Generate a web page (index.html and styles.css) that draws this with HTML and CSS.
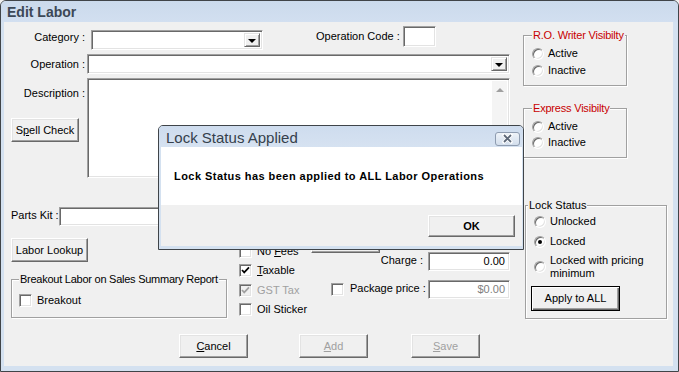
FILE: index.html
```html
<!DOCTYPE html>
<html>
  <head>
    <link rel="stylesheet" href="styles.css">
  </head>
  <body>
    <div class="window">
      <div class="titlebar">Edit Labor</div>
      <div class="client">
        <div class="main">
          <div class="form">
            <div class="row row-top">
              <span class="lbl lbl-col lbl-category">Category :</span>
              <div class="sunken combo combo-category"><div class="field"></div><div class="drop"><i></i></div></div>
              <span class="lbl lbl-opcode">Operation Code :</span>
              <div class="sunken opcode"></div>
            </div>
            <div class="row row-operation">
              <span class="lbl lbl-col">Operation :</span>
              <div class="sunken combo combo-operation"><div class="field"></div><div class="drop"><i></i></div></div>
            </div>
            <div class="row row-description">
              <div class="desc-left">
                <span class="lbl lbl-col">Description :</span>
                <div class="btn spell">S<u>p</u>ell Check</div>
              </div>
              <div class="sunken memo">
                <div class="memo-text"></div>
                <div class="scroll"><i></i></div>
              </div>
            </div>
            <div class="lower">
              <div class="lower-left">
                <div class="parts-row">
                  <span class="lbl lbl-parts">Parts Kit :</span>
                  <div class="sunken parts"></div>
                </div>
                <div class="btn lookup">Labor Lookup</div>
                <div class="group breakout">
                  <span class="legend">Breakout Labor on Sales Summary Report</span>
                  <div class="check check-breakout"><span class="box"></span><span>Breakout</span></div>
                </div>
              </div>
              <div class="lower-mid">
                <div class="check check-nofees"><span class="box"></span><span>No <u>F</u>ees</span></div>
                <div class="check check-taxable"><span class="box on"><svg width="9" height="9" viewBox="0 0 9 9"><path d="M1 4 L3.2 6.4 L8 1.4" fill="none" stroke="#000" stroke-width="1.7"/></svg></span><span><u>T</u>axable</span></div>
                <div class="check check-gst off"><span class="box on dis"><svg width="9" height="9" viewBox="0 0 9 9"><path d="M1 4 L3.2 6.4 L8 1.4" fill="none" stroke="#a0a0a0" stroke-width="1.7"/></svg></span><span>GST Tax</span></div>
                <div class="check check-oil"><span class="box"></span><span>Oil Sticker</span></div>
              </div>
              <div class="lower-right">
                <div class="btn fee"></div>
                <div class="charge-row">
                  <span class="lbl lbl-charge">Charge :</span>
                  <div class="sunken money">0.00</div>
                </div>
                <div class="package-row">
                  <span class="box"></span>
                  <span class="lbl lbl-package">Package price :</span>
                  <div class="sunken money dim">$0.00</div>
                </div>
              </div>
            </div>
          </div>
          <div class="side">
            <div class="group ro">
              <span class="legend red">R.O. Writer Visibilty</span>
              <div class="radio r1"><span class="dot"></span><span>Active</span></div>
              <div class="radio r2"><span class="dot"></span><span>Inactive</span></div>
            </div>
            <div class="group express">
              <span class="legend red">Express Visibilty</span>
              <div class="radio e1"><span class="dot"></span><span>Active</span></div>
              <div class="radio e2"><span class="dot"></span><span>Inactive</span></div>
            </div>
            <div class="group lock">
              <span class="legend">Lock Status</span>
              <div class="radio l1"><span class="dot"></span><span>Unlocked</span></div>
              <div class="radio l2"><span class="dot on"></span><span>Locked</span></div>
              <div class="radio l3"><span class="dot"></span><span>Locked with pricing<br>minimum</span></div>
              <div class="btn default apply">Apply to ALL</div>
            </div>
          </div>
        </div>
        <div class="actions">
          <div class="btn act cancel"><span><u>C</u>ancel</span></div>
          <div class="btn act add off"><span><u>A</u>dd</span></div>
          <div class="btn act save off"><span><u>S</u>ave</span></div>
        </div>
      </div>
    </div>

    <div class="dialog">
      <div class="dlg-title">
        <span>Lock Status Applied</span>
        <div class="close"><svg width="23" height="12" viewBox="0 0 23 12"><path d="M8 2 L15 9 M15 2 L8 9" stroke="#fff" stroke-width="3.4" stroke-linecap="round"/><path d="M8 2 L15 9 M15 2 L8 9" stroke="#5d6878" stroke-width="1.8"/></svg></div>
      </div>
      <div class="dlg-body">Lock Status has been applied to ALL Labor Operations</div>
      <div class="dlg-foot">
        <div class="btn ok">OK</div>
      </div>
    </div>
  </body>
</html>
```

FILE: styles.css
```css
body {
  margin: 0;
  font-family: "Liberation Sans", Arial, sans-serif;
  font-size: 11px;
  color: #000;
  background: #f0f0f0;
}
u { text-decoration: underline; text-underline-offset: 1px; }

/* window frame */
.window {
  width: 679px;
  height: 372px;
  box-sizing: border-box;
  border: 1px solid #404448;
  border-radius: 6px 6px 0 0;
  background: #d4e1f0;
  padding: 0 5px 5px 3px;
  display: flex;
  flex-direction: column;
}
.titlebar {
  height: 19px;
  margin: 0 -5px 0 -3px;
  padding: 2px 0 0 6px;
  border-radius: 5px 5px 0 0;
  background: linear-gradient(#cbdaec, #d2dff0);
  font-size: 14px;
  font-weight: bold;
  line-height: 19px;
  color: #3c4856;
}
.client {
  flex: 1;
  background: #f0f0f0;
}
.main { display: flex; height: 296px; }

/* 3d borders */
.sunken {
  box-sizing: border-box;
  background: #fff;
  border: 1px solid;
  border-color: #a0a0a0 #fff #fff #a0a0a0;
  box-shadow: inset 1px 1px 0 #696969, inset -1px -1px 0 #e3e3e3;
}
.btn {
  box-sizing: border-box;
  background: #f0f0f0;
  border: 1px solid;
  border-color: #fff #696969 #696969 #fff;
  box-shadow: inset -1px -1px 0 #a0a0a0, inset 1px 1px 0 #e3e3e3;
  display: flex;
  align-items: center;
  justify-content: center;
  line-height: 13px;
}
.btn.default {
  border: 1px solid #000;
  box-shadow: inset 1px 1px 0 #fff, inset -1px -1px 0 #696969, inset -2px -2px 0 #a0a0a0;
}
.off { color: #a0a0a0; }
.lbl { line-height: 13px; white-space: nowrap; }

/* top form */
.form { width: 511px; padding-top: 4px; }
.row { display: flex; align-items: flex-start; }
.lbl-col { width: 81px; text-align: right; }
.lbl-category { margin-top: 5px; }
.combo {
  display: flex;
  height: 20px;
  padding: 2px;
}
.combo .field { flex: 1; }
.combo .drop {
  width: 16px;
  box-sizing: border-box;
  background: #f0f0f0;
  border: 1px solid;
  border-color: #e3e3e3 #696969 #696969 #e3e3e3;
  box-shadow: inset 1px 1px 0 #fff, inset -1px -1px 0 #a0a0a0;
  display: flex;
  align-items: center;
  justify-content: center;
}
.combo .drop i {
  width: 0;
  height: 0;
  border-left: 4px solid transparent;
  border-right: 4px solid transparent;
  border-top: 4px solid #000;
  margin-top: 1px;
}
.combo-category { margin: 4px 0 0 6px; width: 172px; }
.lbl-opcode { margin: 4px 0 0 53px; width: 83px; text-align: right; }
.opcode { width: 33px; height: 21px; margin-left: 4px; }
.row-operation { margin-top: 4px; }
.row-operation .lbl-col { margin-top: 4px; }
.combo-operation { margin-left: 2px; width: 423px; }
.row-description { margin-top: 4px; }
.desc-left { display: flex; flex-direction: column; width: 81px; }
.desc-left .lbl-col { margin-top: 9px; }
.spell { margin: 18px 0 0 7px; width: 68px; height: 24px; }
.memo {
  margin-left: 2px;
  width: 423px;
  height: 100px;
  padding: 2px;
  display: flex;
}
.memo-text { flex: 1; }
.scroll {
  width: 15px;
  background: #f4f4f4;
  display: flex;
  justify-content: center;
}
.scroll i {
  margin-top: 7px;
  width: 0;
  height: 0;
  border-left: 4px solid transparent;
  border-right: 4px solid transparent;
  border-bottom: 4px solid #a0a0a0;
}

/* lower part */
.lower { display: flex; height: 140px; }
.lower-left { width: 225px; padding-left: 7px; }
.parts-row { display: flex; margin-top: 29px; }
.lbl-parts { width: 48px; margin-top: 2px; }
.parts { width: 172px; height: 19px; }
.lookup { margin-top: 12px; width: 77px; height: 24px; }

.group {
  box-sizing: border-box;
  border: 1px solid #a0a0a0;
  box-shadow: inset 1px 1px 0 #fff, 1px 1px 0 #fff;
}
.legend {
  display: table;
  white-space: nowrap;
  line-height: 13px;
  margin: -7px 0 0 7px;
  padding: 0 1px;
  background: #f0f0f0;
}
.legend.red { color: #c80000; letter-spacing: -0.2px; }
.breakout .legend { letter-spacing: -0.25px; }
.breakout { margin-top: 17px; width: 216px; height: 39px; }

.check { display: flex; align-items: center; height: 13px; line-height: 13px; white-space: nowrap; }
.check > span + span { margin-left: 5px; }
.box {
  box-sizing: border-box;
  width: 13px;
  height: 13px;
  flex: none;
  background: #fff;
  border: 1px solid;
  border-color: #a0a0a0 #fff #fff #a0a0a0;
  box-shadow: inset 1px 1px 0 #696969, inset -1px -1px 0 #e3e3e3;
  display: flex;
  align-items: center;
  justify-content: center;
}
.box.dis { background: #f0f0f0; }
.check-breakout { margin: 8px 0 0 7px; }

.lower-mid { width: 88px; padding-left: 3px; }
.check-nofees { margin-top: 67px; }
.check-taxable { margin-top: 6px; }
.check-gst { margin-top: 7px; }
.check-oil { margin-top: 6px; }

.lower-right { width: 183px; }
.fee { margin: 53px 0 0 -16px; width: 69px; height: 22px; }
.charge-row { display: flex; margin-top: -1px; }
.lbl-charge { width: 96px; text-align: right; margin-top: 2px; }
.money {
  width: 82px;
  height: 19px;
  margin-left: 5px;
  padding: 2px 4px 0 0;
  text-align: right;
  line-height: 13px;
}
.money.dim { color: #808080; }
.package-row { display: flex; margin-top: 9px; }
.package-row .box { margin: 3px 0 0 4px; }
.lbl-package { flex: 1; margin: 2px 0 0 6px; }
.package-row .money { margin-left: 0; }

/* right column */
.side { margin-left: 8px; width: 144px; }
.ro { margin-top: 13px; width: 104px; height: 51px; }
.express { margin-top: 22px; width: 104px; height: 50px; }
.lock { margin: 47px 0 0 2px; width: 142px; height: 114px; }
.ro .legend, .express .legend { margin-left: 8px; }
.lock .legend { margin-left: 2px; }

.radio { display: flex; align-items: center; line-height: 13px; padding-left: 8px; white-space: nowrap; }
.radio > span + span { margin-left: 4px; }
.dot {
  box-sizing: border-box;
  width: 12px;
  height: 12px;
  flex: none;
  border-radius: 50%;
  background: #fff;
  border: 1px solid;
  border-color: #a0a0a0 #fff #fff #a0a0a0;
  box-shadow: inset 1px 1px 0 #696969, inset -1px -1px 0 #e3e3e3;
  display: flex;
  align-items: center;
  justify-content: center;
}
.dot.on::after {
  content: "";
  width: 4px;
  height: 4px;
  border-radius: 50%;
  background: #000;
}
.r1 { margin-top: 5px; }
.r2 { margin-top: 4px; }
.e1 { margin-top: 5px; }
.e2 { margin-top: 3px; }
.l1 { margin-top: 3px; }
.l2 { margin-top: 7px; }
.l3 { margin-top: 6px; }
.apply { margin: 6px 0 0 5px; width: 89px; height: 25px; }

/* bottom buttons */
.actions { display: flex; margin-top: 16px; }
.act { width: 69px; height: 24px; }
.cancel { margin-left: 175px; }
.add { margin-left: 51px; }
.save { margin-left: 43px; }

/* message box */
.dialog {
  position: absolute;
  left: 158px;
  top: 125px;
  width: 366px;
  height: 125px;
  box-sizing: border-box;
  border: 1px solid #3f4449;
  border-radius: 5px 5px 0 0;
  background: #d4e1f0;
  padding: 0 1px 3px 2px;
  display: flex;
  flex-direction: column;
}
.dlg-title {
  height: 21px;
  margin: 0 -1px 0 -2px;
  border-radius: 4px 4px 0 0;
  background: linear-gradient(#cedcee, #d6e2f1);
  display: flex;
  align-items: center;
  padding-left: 7px;
  font-size: 15px;
  color: #35404c;
}
.dlg-title span { flex: 1; padding-top: 1px; }
.close {
  width: 25px;
  height: 14px;
  box-sizing: border-box;
  margin: 4px 3px 0 0;
  border: 1px solid #8e9cb0;
  border-radius: 3px;
  background: linear-gradient(#eef3f9, #d3deec);
  display: flex;
  align-items: center;
  justify-content: center;
}
.dlg-body {
  height: 58px;
  box-sizing: border-box;
  background: #fff;
  padding: 23px 0 0 13px;
  line-height: 13px;
  font-weight: bold;
  letter-spacing: 0.45px;
}
.dlg-foot {
  flex: 1;
  background: #f0f0f0;
  display: flex;
  justify-content: flex-end;
  padding: 10px 7px 0 0;
}
.ok { width: 87px; height: 22px; font-weight: bold; }
```
